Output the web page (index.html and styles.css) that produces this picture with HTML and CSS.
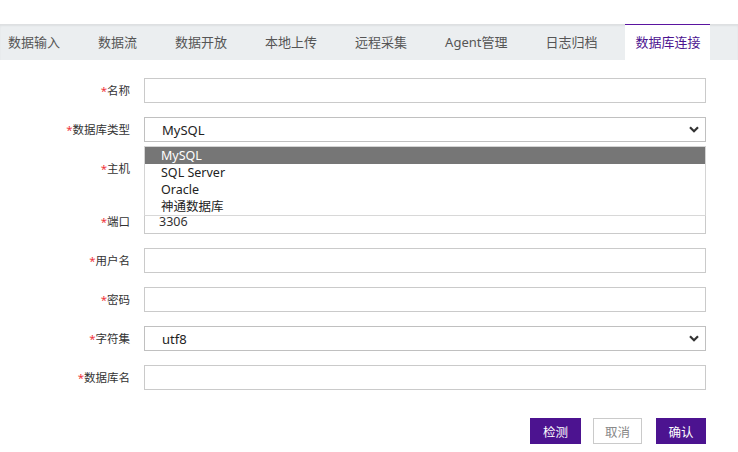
FILE: index.html
```html
<!DOCTYPE html>
<html lang="zh">
<head>
<meta charset="utf-8">
<link rel="stylesheet" href="styles.css">
</head>
<body>
<div class="page">
  <nav class="tabbar">
    <ul class="tabs">
      <li class="tab">数据输入</li>
      <li class="tab">数据流</li>
      <li class="tab">数据开放</li>
      <li class="tab">本地上传</li>
      <li class="tab">远程采集</li>
      <li class="tab">Agent管理</li>
      <li class="tab">日志归档</li>
      <li class="tab active">数据库连接</li>
      <li class="tab">日志分析</li>
    </ul>
  </nav>

  <form class="form">
    <div class="row">
      <label class="label"><span class="req">*</span>名称</label>
      <div class="control"><input class="input" type="text"></div>
    </div>
    <div class="row">
      <label class="label"><span class="req">*</span>数据库类型</label>
      <div class="control">
        <div class="select">
          <span class="select-value">MySQL</span>
          <svg class="chev" width="10" height="7" viewBox="0 0 10 7"><path d="M1 1.2 L5 5.2 L9 1.2" fill="none" stroke="#333" stroke-width="2.2"/></svg>
        </div>
        <ul class="dropdown">
          <li class="opt selected">MySQL</li>
          <li class="opt">SQL Server</li>
          <li class="opt">Oracle</li>
          <li class="opt">神通数据库</li>
        </ul>
      </div>
    </div>
    <div class="row row-host">
      <label class="label"><span class="req">*</span>主机</label>
      <div class="control"><input class="input" type="text"></div>
    </div>
    <div class="row">
      <label class="label"><span class="req">*</span>端口</label>
      <div class="control"><input class="input port" type="text" value="3306"></div>
    </div>
    <div class="row">
      <label class="label"><span class="req">*</span>用户名</label>
      <div class="control"><input class="input" type="text"></div>
    </div>
    <div class="row">
      <label class="label"><span class="req">*</span>密码</label>
      <div class="control"><input class="input" type="password"></div>
    </div>
    <div class="row">
      <label class="label"><span class="req">*</span>字符集</label>
      <div class="control">
        <div class="select">
          <span class="select-value">utf8</span>
          <svg class="chev" width="10" height="7" viewBox="0 0 10 7"><path d="M1 1.2 L5 5.2 L9 1.2" fill="none" stroke="#333" stroke-width="2.2"/></svg>
        </div>
      </div>
    </div>
    <div class="row">
      <label class="label"><span class="req">*</span>数据库名</label>
      <div class="control"><input class="input" type="text"></div>
    </div>

    <div class="actions">
      <button type="button" class="btn primary">检测</button>
      <button type="button" class="btn ghost">取消</button>
      <button type="button" class="btn primary confirm">确认</button>
    </div>
  </form>
</div>
</body>
</html>
```

FILE: styles.css
```css
* { box-sizing: border-box; }

html, body {
  margin: 0;
  padding: 0;
  background: #fff;
  overflow: hidden;
}

body {
  font-family: "Noto Sans", "Noto Sans CJK SC", sans-serif;
  font-size: 13px;
  color: #333;
  width: 738px;
  height: 452px;
}

.page {
  padding-top: 24px;
}

.tabbar {
  height: 36px;
  background: #ebeef0;
  box-shadow: inset 0 2px 2px rgba(0, 0, 0, 0.06);
  overflow: hidden;
}

.tabs {
  list-style: none;
  margin: 0 0 0 -11px;
  padding: 0;
  display: flex;
  white-space: nowrap;
  height: 36px;
}

.tab {
  flex: none;
  margin: 0 9px;
  padding: 0 10px;
  height: 36px;
  line-height: 36px;
  color: #555;
  font-size: 13px;
}

.tab.active {
  background: #fff;
  color: #4c1390;
  border-top: 1px solid #5a14a0;
  line-height: 34px;
}

.form {
  margin: 18px 0 0 0;
}

.row {
  display: flex;
  align-items: center;
  margin-bottom: 14px;
}

.row-host {
  margin-bottom: 28px;
}

.label {
  width: 130px;
  text-align: right;
  margin-right: 14px;
  color: #333;
  font-size: 11.5px;
  line-height: 16px;
  flex: none;
}

.req {
  color: #f0353d;
}

.control {
  position: relative;
  width: 562px;
  flex: none;
}

.input {
  display: block;
  width: 100%;
  height: 25px;
  border: 1px solid #cacaca;
  border-radius: 0;
  padding: 0 14px;
  font-family: "Noto Sans", "Noto Sans CJK SC", sans-serif;
  font-size: 12.5px;
  color: #333;
  background: #fff;
  outline: none;
}

.select {
  display: flex;
  align-items: center;
  justify-content: space-between;
  height: 25px;
  border: 1px solid #c0c0c0;
  padding: 0 6px 0 17px;
  background: #fff;
}

.select-value {
  font-size: 13px;
  color: #222;
  line-height: 18px;
}

.chev {
  display: block;
}

.dropdown {
  position: absolute;
  top: 29px;
  left: 0;
  width: 562px;
  margin: 0;
  padding: 0;
  list-style: none;
  background: #fff;
  border: 1px solid #d4d4d4;
  border-bottom-color: #d8d8d8;
  z-index: 10;
}

.opt {
  height: 17px;
  line-height: 17px;
  padding-left: 16px;
  font-size: 12.5px;
  color: #222;
}

.opt.selected {
  background: #767676;
  color: #fff;
}

.actions {
  display: flex;
  justify-content: flex-end;
  width: 706px;
  margin-top: 28px;
}

.btn {
  height: 26px;
  padding: 0;
  font-family: "Noto Sans", "Noto Sans CJK SC", sans-serif;
  font-size: 12.5px;
  border-radius: 0;
  cursor: pointer;
}

.btn.primary {
  width: 51px;
  background: #4c1390;
  border: 1px solid #4c1390;
  color: #fff;
}

.btn.ghost {
  width: 49px;
  margin-left: 12px;
  background: #fff;
  border: 1px solid #cacaca;
  color: #888;
}

.btn.confirm {
  width: 50px;
  margin-left: 14px;
}
```
